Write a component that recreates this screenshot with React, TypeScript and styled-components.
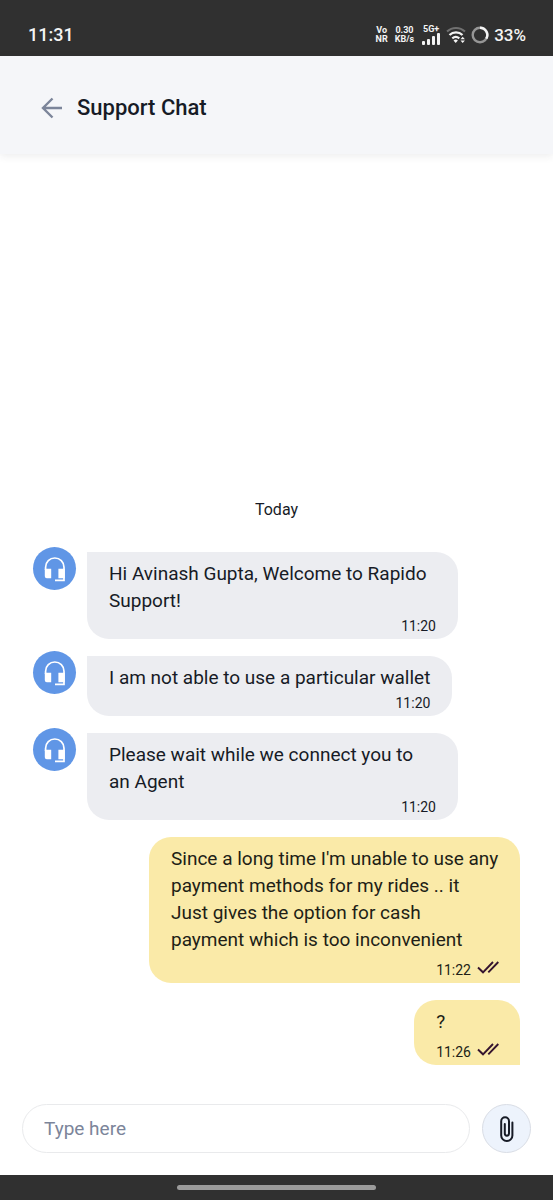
import React from "react";
import styled, { createGlobalStyle } from "styled-components";

const GlobalStyle = createGlobalStyle`
  *, *::before, *::after { box-sizing: border-box; }
  body {
    margin: 0;
    background: #ffffff;
    color: #171b26;
    font-family: Roboto, "Liberation Sans", sans-serif;
  }
`;

const Screen = styled.div`
  display: flex;
  flex-direction: column;
  min-height: 100vh;
`;

const StatusBar = styled.div`
  display: flex;
  align-items: center;
  justify-content: space-between;
  height: 56px;
  padding: 13px 27px 0 28px;
  background: #303030;
  color: #f4f4f4;
`;

const Clock = styled.time`
  font-size: 18px;
  font-weight: 500;
`;

const StatusIcons = styled.div`
  display: flex;
  align-items: center;
  gap: 5px;
`;

const TinyStack = styled.span`
  margin-right: 2px;
  font-size: 9px;
  line-height: 9px;
  font-weight: 700;
  text-align: center;
`;

const Signal = styled.span`
  display: flex;
  flex-direction: column;
  align-items: center;
  font-size: 9px;
  line-height: 8px;
  font-weight: 700;
`;

const Battery = styled.span`
  font-size: 17px;
  font-weight: 500;
`;

const Header = styled.header`
  display: flex;
  align-items: center;
  gap: 14px;
  padding: 39px 41px 33px;
  background: #f5f6f9;
  box-shadow: 0 2px 8px rgba(40, 45, 60, 0.09);
`;

const BackButton = styled.button`
  display: flex;
  padding: 0;
  border: 0;
  background: none;
`;

const Title = styled.h1`
  margin: 0;
  font-size: 22px;
  line-height: 26px;
  font-weight: 500;
`;

const Conversation = styled.main`
  display: flex;
  flex: 1;
  flex-direction: column;
  justify-content: flex-end;
  gap: 17px;
  padding: 24px 33px 0;
`;

const Day = styled.p`
  margin: 0 0 15px;
  font-size: 16px;
  line-height: 20px;
  text-align: center;
`;

const Row = styled.article<{ $mine?: boolean }>`
  display: flex;
  align-items: flex-start;
  justify-content: ${(p) => (p.$mine ? "flex-end" : "flex-start")};
  gap: 11px;
`;

const Avatar = styled.span`
  display: flex;
  flex: none;
  align-items: center;
  justify-content: center;
  width: 43px;
  height: 43px;
  margin-top: -5px;
  border-radius: 50%;
  background: #6096e6;
`;

const Bubble = styled.div<{ $mine?: boolean }>`
  max-width: 371px;
  padding: ${(p) => (p.$mine ? "8px 21px 3px 22px" : "8px 22px 3px 22px")};
  border-radius: ${(p) => (p.$mine ? "22px 22px 0 22px" : "0 22px 22px 22px")};
  background: ${(p) => (p.$mine ? "#faeaa8" : "#ecedf1")};
  color: ${(p) => (p.$mine ? "#211e16" : "#171b26")};
`;

const Message = styled.p`
  margin: 0;
  font-size: 19px;
  line-height: 27px;
  white-space: pre-line;
`;

const Meta = styled.div<{ $mine?: boolean }>`
  display: flex;
  align-items: center;
  justify-content: flex-end;
  gap: 6px;
  padding-top: ${(p) => (p.$mine ? "7px" : "2px")};
  font-size: 14px;
  line-height: 20px;
`;

const Ticks = styled.svg`
  margin-top: -6px;
`;

const Composer = styled.form`
  display: flex;
  gap: 12px;
  padding: 39px 22px 22px;
`;

const TextField = styled.input`
  flex: 1;
  min-width: 0;
  height: 49px;
  padding: 0 21px;
  border: 1px solid #e9eaec;
  border-radius: 25px;
  background: #ffffff;
  color: #171b26;
  font-family: inherit;
  font-size: 19px;
  &::placeholder { color: #7c859a; opacity: 1; }
`;

const AttachButton = styled.button`
  display: flex;
  align-items: center;
  justify-content: center;
  width: 49px;
  height: 49px;
  padding: 0;
  border: 1px solid #d9dde5;
  border-radius: 50%;
  background: #edf3fc;
`;

const NavigationBar = styled.div`
  display: flex;
  align-items: center;
  justify-content: center;
  height: 25px;
  background: #303030;
`;

const Handle = styled.span`
  width: 36%;
  height: 5px;
  border-radius: 3px;
  background: #9b9b9b;
`;

function Headset() {
  return (
    <svg width="24" height="26" viewBox="0 0 24 26" fill="none" aria-hidden="true">
      <path d="M2.6 14V11.2a9.2 9.2 0 0 1 18.4 0V24.4H12" stroke="#fff" strokeWidth="1.7" />
      <path d="M1.8 12.8h6.4v9.4H3.8a2 2 0 0 1-2-2zM15.4 12.8h6.4v9.4h-6.4z" fill="#fff" />
    </svg>
  );
}

function DoubleTick() {
  return (
    <Ticks width="22" height="13" viewBox="0 0 22 13" fill="none" stroke="#35142f" strokeWidth="1.9" role="img" aria-label="Read">
      <path d="M1 6.5 6 11.3 16 1M11.3 11.3 21.3 1" />
    </Ticks>
  );
}

const messages = [
  { text: "Hi Avinash Gupta, Welcome to Rapido Support!", time: "11:20", mine: false },
  { text: "I am not able to use a particular wallet", time: "11:20", mine: false },
  { text: "Please wait while we connect you to an Agent", time: "11:20", mine: false },
  {
    text: "Since a long time I'm unable to use any payment methods for my rides .. it\nJust gives the option for cash\npayment which is too inconvenient",
    time: "11:22",
    mine: true,
  },
  { text: "?", time: "11:26", mine: true },
];

export default function App() {
  return (
    <>
      <GlobalStyle />
      <Screen>
        <StatusBar>
          <Clock>11:31</Clock>
          <StatusIcons>
            <TinyStack>Vo<br />NR</TinyStack>
            <TinyStack>0.30<br />KB/s</TinyStack>
            <Signal>
              5G+
              <svg width="20" height="12" viewBox="0 0 20 12" fill="#f4f4f4" aria-hidden="true">
                <rect x="1" y="8" width="3" height="4" rx="1" />
                <rect x="6" y="6" width="3" height="6" rx="1" />
                <rect x="11" y="3" width="3" height="9" rx="1" />
                <rect x="16" y="0" width="3" height="12" rx="1" />
              </svg>
            </Signal>
            <svg width="20" height="18" viewBox="0 0 20 18" fill="none" aria-hidden="true">
              <path d="M1 5.5a13 13 0 0 1 18 0" stroke="#707070" strokeWidth="2" />
              <path d="M3.5 9a9.3 9.3 0 0 1 13 0" stroke="#f4f4f4" strokeWidth="2.2" />
              <path d="M6.3 12.3a5.4 5.4 0 0 1 7 0" stroke="#f4f4f4" strokeWidth="2.2" />
              <path d="M7.5 14.5a3.2 3.2 0 0 1 4.4 0L9.7 17z" fill="#f4f4f4" />
              <path d="m14.5 13.3 2.2-2.6 2.2 2.6zM14.5 14.4l2.2 2.6 2.2-2.6z" fill="#f4f4f4" />
            </svg>
            <svg width="18" height="18" viewBox="0 0 18 18" fill="none" strokeWidth="2.4" aria-hidden="true">
              <circle cx="9" cy="9" r="7.3" stroke="#969696" />
              <path d="M9 1.7a7.3 7.3 0 0 1 6.3 11" stroke="#f4f4f4" />
            </svg>
            <Battery>33%</Battery>
          </StatusIcons>
        </StatusBar>

        <Header>
          <BackButton type="button" aria-label="Back">
            <svg width="22" height="22" viewBox="0 0 22 22" fill="none" stroke="#7c859a" strokeWidth="2.4" aria-hidden="true">
              <path d="M21 11H2M11.5 1.5 2 11l9.5 9.5" />
            </svg>
          </BackButton>
          <Title>Support Chat</Title>
        </Header>

        <Conversation>
          <Day>Today</Day>
          {messages.map((m) => (
            <Row key={m.text} $mine={m.mine}>
              {!m.mine && <Avatar><Headset /></Avatar>}
              <Bubble $mine={m.mine}>
                <Message>{m.text}</Message>
                <Meta $mine={m.mine}>
                  <time>{m.time}</time>
                  {m.mine && <DoubleTick />}
                </Meta>
              </Bubble>
            </Row>
          ))}
        </Conversation>

        <Composer>
          <TextField type="text" placeholder="Type here" aria-label="Message" />
          <AttachButton type="button" aria-label="Attach a file">
            <svg width="14" height="26" viewBox="0 0 14 26" fill="none" stroke="#171b26" strokeWidth="2" strokeLinecap="round" aria-hidden="true">
              <path d="M12.4 6.6V19.4a5.6 5.6 0 0 1-11.2 0V5.2a3.9 3.9 0 0 1 7.8 0V17.6a2.1 2.1 0 0 1-4.2 0V8" />
            </svg>
          </AttachButton>
        </Composer>

        <NavigationBar><Handle /></NavigationBar>
      </Screen>
    </>
  );
}
